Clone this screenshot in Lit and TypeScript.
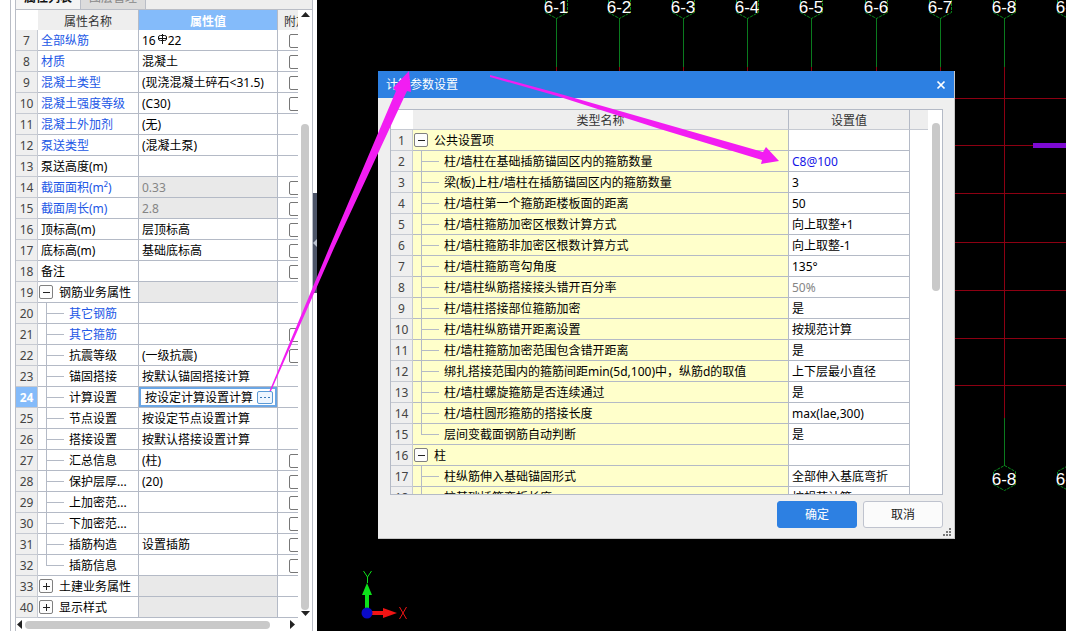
import { LitElement, html, svg, css, nothing } from "lit";
import { customElement, property, state } from "lit/decorators.js";
import { classMap } from "lit/directives/class-map.js";

type Kind = "root" | "group" | "child" | "last";

interface Row {
  no: number;
  name: string;
  kind?: Kind;
  open?: boolean;
  value?: string;
  link?: boolean;
  muted?: boolean;
  grey?: boolean;
  blue?: boolean;
  check?: boolean;
  bar?: boolean;
  editing?: boolean;
}

const PROPERTIES: Row[] = [
  { no: 7, name: "全部纵筋", value: "16|22", bar: true, link: true, check: true },
  { no: 8, name: "材质", value: "混凝土", link: true, check: true },
  { no: 9, name: "混凝土类型", value: "(现浇混凝土碎石<31.5)", link: true, check: true },
  { no: 10, name: "混凝土强度等级", value: "(C30)", link: true, check: true },
  { no: 11, name: "混凝土外加剂", value: "(无)", link: true },
  { no: 12, name: "泵送类型", value: "(混凝土泵)", link: true },
  { no: 13, name: "泵送高度(m)" },
  { no: 14, name: "截面面积(m²)", value: "0.33", link: true, grey: true, muted: true, check: true },
  { no: 15, name: "截面周长(m)", value: "2.8", link: true, grey: true, muted: true, check: true },
  { no: 16, name: "顶标高(m)", value: "层顶标高", check: true },
  { no: 17, name: "底标高(m)", value: "基础底标高", check: true },
  { no: 18, name: "备注", check: true },
  { no: 19, name: "钢筋业务属性", kind: "group", open: true, grey: true },
  { no: 20, name: "其它钢筋", kind: "child", link: true },
  { no: 21, name: "其它箍筋", kind: "child", link: true, check: true },
  { no: 22, name: "抗震等级", kind: "child", value: "(一级抗震)", check: true },
  { no: 23, name: "锚固搭接", kind: "child", value: "按默认锚固搭接计算" },
  { no: 24, name: "计算设置", kind: "child", value: "按设定计算设置计算", editing: true },
  { no: 25, name: "节点设置", kind: "child", value: "按设定节点设置计算" },
  { no: 26, name: "搭接设置", kind: "child", value: "按默认搭接设置计算" },
  { no: 27, name: "汇总信息", kind: "child", value: "(柱)", check: true },
  { no: 28, name: "保护层厚...", kind: "child", value: "(20)", check: true },
  { no: 29, name: "上加密范...", kind: "child", check: true },
  { no: 30, name: "下加密范...", kind: "child", check: true },
  { no: 31, name: "插筋构造", kind: "child", value: "设置插筋", check: true },
  { no: 32, name: "插筋信息", kind: "last", check: true },
  { no: 33, name: "土建业务属性", kind: "group", grey: true },
  { no: 40, name: "显示样式", kind: "group", grey: true },
];

const SETTINGS: Row[] = [
  { no: 1, name: "公共设置项", kind: "group", open: true },
  { no: 2, name: "柱/墙柱在基础插筋锚固区内的箍筋数量", kind: "child", value: "C8@100", blue: true },
  { no: 3, name: "梁(板)上柱/墙柱在插筋锚固区内的箍筋数量", kind: "child", value: "3" },
  { no: 4, name: "柱/墙柱第一个箍筋距楼板面的距离", kind: "child", value: "50" },
  { no: 5, name: "柱/墙柱箍筋加密区根数计算方式", kind: "child", value: "向上取整+1" },
  { no: 6, name: "柱/墙柱箍筋非加密区根数计算方式", kind: "child", value: "向上取整-1" },
  { no: 7, name: "柱/墙柱箍筋弯勾角度", kind: "child", value: "135°" },
  { no: 8, name: "柱/墙柱纵筋搭接接头错开百分率", kind: "child", value: "50%", muted: true },
  { no: 9, name: "柱/墙柱搭接部位箍筋加密", kind: "child", value: "是" },
  { no: 10, name: "柱/墙柱纵筋错开距离设置", kind: "child", value: "按规范计算" },
  { no: 11, name: "柱/墙柱箍筋加密范围包含错开距离", kind: "child", value: "是" },
  { no: 12, name: "绑扎搭接范围内的箍筋间距min(5d,100)中，纵筋d的取值", kind: "child", value: "上下层最小直径" },
  { no: 13, name: "柱/墙柱螺旋箍筋是否连续通过", kind: "child", value: "是" },
  { no: 14, name: "柱/墙柱圆形箍筋的搭接长度", kind: "child", value: "max(lae,300)" },
  { no: 15, name: "层间变截面钢筋自动判断", kind: "last", value: "是" },
  { no: 16, name: "柱", kind: "group", open: true },
  { no: 17, name: "柱纵筋伸入基础锚固形式", kind: "child", value: "全部伸入基底弯折" },
  { no: 18, name: "柱基础插筋弯折长度", kind: "child", value: "按规范计算" },
];

const gridStyles = css`
  table {
    border-collapse: separate;
    border-spacing: 0;
    table-layout: fixed;
    color: #000;
  }
  th,
  td {
    box-sizing: border-box;
    height: 21px;
    padding: 2px 0 0 3px;
    border-right: 1px solid #b4bac6;
    border-bottom: 1px solid #b4bac6;
    text-align: left;
    font-weight: 400;
    line-height: 18px;
    white-space: nowrap;
    overflow: hidden;
  }
  thead th {
    height: 20px;
    padding: 2px 0 0;
    border-bottom: 0;
    background: #eee;
    color: #333;
    line-height: 17px;
    text-align: center;
  }
  tbody th {
    padding: 2px 0 0;
    background: #efefef;
    border-color: #c6cad2;
    color: #444;
    text-align: center;
  }
  thead th.corner {
    background: #fff;
    border-right: 0;
  }
  td.name {
    padding: 0;
  }
  .muted {
    color: #858585;
  }
`;

@customElement("tree-label")
class TreeLabel extends LitElement {
  @property() kind: Kind = "root";
  @property() text = "";
  @property({ type: Boolean }) open = false;
  @property({ type: Boolean }) link = false;

  static styles = css`
    :host {
      display: block;
    }
    .label {
      display: flex;
      align-items: center;
      height: 20px;
      padding-left: 3px;
    }
    .group {
      gap: 6px;
      padding-left: 1px;
    }
    .branch {
      gap: 5px;
      padding-left: 8px;
    }
    .link {
      color: #2257e6;
    }
    .text {
      padding-top: 2px;
    }
    .twig {
      width: 18px;
      height: 20px;
      background: linear-gradient(#b4bac6, #b4bac6) 0 0 / 1px 100% no-repeat,
        linear-gradient(#b4bac6, #b4bac6) 0 10px / 100% 1px no-repeat;
    }
    .end {
      background-size: 1px 10px, 100% 1px;
    }
    .toggle {
      box-sizing: border-box;
      width: 14px;
      height: 14px;
      padding: 0;
      border: 1px solid #808080;
      border-radius: 2px;
      background: #fdfdfd;
    }
    .toggle svg {
      display: block;
    }
  `;

  private flip() {
    this.open = !this.open;
  }

  render() {
    if (this.kind === "group") {
      return html`<div class="label group">
        <button class="toggle" aria-label=${this.text} aria-expanded=${this.open} @click=${this.flip}>
          <svg width="12" height="12" stroke="#222" shape-rendering="crispEdges">
            <path d=${this.open ? "M3 6.5h7" : "M3 6.5h7M6.5 3v7"} />
          </svg>
        </button>
        <span class="text">${this.text}</span>
      </div>`;
    }
    const branch = this.kind !== "root";
    return html`<div class=${classMap({ label: true, branch, link: this.link })}>
      ${branch ? html`<span class=${classMap({ twig: true, end: this.kind === "last" })}></span>` : nothing}
      <span class="text">${this.text}</span>
    </div>`;
  }
}

@customElement("property-panel")
class PropertyPanel extends LitElement {
  static styles = [
    gridStyles,
    css`
      :host {
        display: flex;
        box-sizing: border-box;
        padding-left: 10px;
        background: #fff;
      }
      .frame {
        flex: 1;
        min-width: 0;
        display: flex;
        flex-direction: column;
        border-left: 1px solid #b9bdc6;
        border-right: 1px solid #b9bdc6;
        padding-left: 4px;
      }
      .tabs {
        display: flex;
        align-items: flex-end;
        height: 9px;
        overflow: hidden;
        background: #eee;
        border-left: 1px solid #b9bdc6;
        border-bottom: 1px solid #b9bdc6;
      }
      .tab {
        flex: none;
        box-sizing: border-box;
        height: 22px;
        padding: 0 8px;
        border: 0;
        border-right: 1px solid #b9bdc6;
        background: #dcdcdc;
        color: #888;
        font: inherit;
      }
      .tab.on {
        background: #f4f4f4;
        color: #111;
        font-weight: 700;
      }
      .body {
        flex: 1;
        min-height: 0;
        display: grid;
        grid-template: minmax(0, 1fr) 13px / minmax(0, 1fr) 14px;
        border-left: 1px solid #b9bdc6;
      }
      .view {
        overflow: hidden;
      }
      table {
        width: 299px;
      }
      .c-no {
        width: 22px;
      }
      .c-name {
        width: 101px;
      }
      .c-value {
        width: 139px;
      }
      thead th.sel,
      tbody th.sel {
        background: #84bbfa;
        color: #fff;
        font-weight: 700;
      }
      td.grey {
        background: #e9e9e9;
      }
      td.add {
        padding: 2px 0 0 11px;
        border-right: 0;
      }
      .tick {
        display: block;
        appearance: none;
        box-sizing: border-box;
        width: 14px;
        height: 14px;
        margin: 0;
        border: 1px solid #777;
        border-radius: 2px;
        background: #fff;
      }
      .bar {
        height: 11px;
      }
      td.edit {
        padding: 0;
      }
      .editor {
        display: flex;
        align-items: center;
        box-sizing: border-box;
        height: 20px;
        padding: 0 2px 0 4px;
        border: 2px solid #6ba6e4;
      }
      .editor input {
        flex: 1;
        min-width: 0;
        padding: 2px 0 0;
        border: 0;
        outline: 0;
        background: none;
        color: inherit;
        font: inherit;
      }
      .more {
        box-sizing: border-box;
        width: 16px;
        height: 13px;
        padding: 0;
        border: 1px solid #5b9ad6;
        border-radius: 2px;
        background: #eef6ff;
      }
      .more svg {
        display: block;
      }
      .scroll {
        display: flex;
        align-items: center;
      }
      .scroll.v {
        flex-direction: column;
        padding: 1px 0;
      }
      .scroll svg {
        flex: none;
      }
      .gap {
        flex: 106;
      }
      .thumb-v {
        flex: 486;
        width: 8px;
        border-radius: 4px;
        background: #c9c9c9;
      }
      .thumb-h {
        flex: 245;
        height: 8px;
        border-radius: 4px;
        background: #c9c9c9;
      }
      .rest {
        flex: 18;
      }
      .edge {
        align-self: center;
        display: flex;
        align-items: center;
        justify-content: center;
        width: 4px;
        height: 100px;
        margin-bottom: 146px;
        background: #4d5568;
      }
    `,
  ];

  private value(r: Row) {
    if (r.editing) {
      return html`<div class="editor">
        <input aria-label=${r.name} .value=${r.value ?? ""} />
        <button class="more" aria-label="计算设置">
          <svg width="14" height="11" fill="#3a78b8">
            <path d="M2 5h2v1H2zM6 5h2v1H6zM10 5h2v1h-2z" />
          </svg>
        </button>
      </div>`;
    }
    if (r.bar) {
      const [count, size] = r.value!.split("|");
      return html`${count}<svg class="bar" width="12" height="11" fill="none" stroke="#111" stroke-width="1">
          <path d="M6.5 0v10M2 4.500h9M4.500 1.500h4q2 0 2 1.500v2q0 1.500-2 1.500h-4q-2 0-2-1.500v-2q0-1.500 2-1.500z" /></svg
        >${size}`;
    }
    return r.value ?? "";
  }

  render() {
    return html`
      <div class="frame">
        <div class="tabs" role="tablist">
          <button class="tab on" role="tab" aria-selected="true">属性列表</button>
          <button class="tab" role="tab" aria-selected="false">图层管理</button>
        </div>
        <div class="body">
          <div class="view">
            <table>
              <colgroup>
                <col class="c-no" />
                <col class="c-name" />
                <col class="c-value" />
                <col />
              </colgroup>
              <thead>
                <tr>
                  <th class="corner"></th>
                  <th>属性名称</th>
                  <th class="sel">属性值</th>
                  <th>附加</th>
                </tr>
              </thead>
              <tbody>
                ${PROPERTIES.map(
                  (r) => html`<tr>
                    <th class=${classMap({ sel: !!r.editing })}>${r.no}</th>
                    <td class="name">
                      <tree-label .kind=${r.kind ?? "root"} .text=${r.name} ?open=${r.open} ?link=${r.link}></tree-label>
                    </td>
                    <td class=${classMap({ grey: !!r.grey, muted: !!r.muted, edit: !!r.editing })}>${this.value(r)}</td>
                    <td class="add">
                      ${r.check ? html`<input class="tick" type="checkbox" aria-label=${r.name} />` : nothing}
                    </td>
                  </tr>`
                )}
              </tbody>
            </table>
          </div>
          <div class="scroll v">
            <svg width="9" height="7" fill="#222"><path d="M0 6l4.500-5L9 6z" /></svg>
            <span class="gap"></span><span class="thumb-v"></span>
            <svg width="9" height="7" fill="#222"><path d="M0 1h9L4.500 6z" /></svg>
          </div>
          <div class="scroll">
            <svg width="9" height="9" fill="#222"><path d="M6 0v9L1 4.500z" /></svg>
            <span class="thumb-h"></span><span class="rest"></span>
            <svg width="10" height="9" fill="#222"><path d="M2 0v9l5-4.500z" /></svg>
          </div>
        </div>
      </div>
      <div class="edge">
        <svg width="4" height="8" fill="#bcc3d0"><path d="M4 0v8L0 4z" /></svg>
      </div>
    `;
  }
}

@customElement("settings-dialog")
class SettingsDialog extends LitElement {
  static styles = [
    gridStyles,
    css`
      :host {
        display: flex;
        flex-direction: column;
        box-sizing: border-box;
        background: #efefef;
        border-right: 1px solid #c8c8c8;
        border-bottom: 1px solid #c8c8c8;
      }
      header {
        display: flex;
        align-items: center;
        justify-content: space-between;
        height: 27px;
        padding: 0 7px 0 8px;
        background: #2d80e2;
        color: #fff;
      }
      h1 {
        margin: 0;
        font-size: 12px;
        font-weight: 400;
      }
      .close {
        display: flex;
        padding: 1px;
        border: 0;
        background: none;
      }
      .box {
        flex: 1;
        min-height: 0;
        display: flex;
        margin: 11px 11px 0 12px;
        border: 1px solid #b4bac6;
        background: #fff;
      }
      .view {
        flex: 1;
        min-width: 0;
        overflow: hidden;
      }
      table {
        width: 100%;
      }
      .c-no {
        width: 22px;
      }
      .c-value {
        width: 121px;
      }
      .c-fill {
        width: 18px;
      }
      tbody td.name {
        background: #ffffcb;
      }
      thead th {
        border-bottom: 1px solid #c6cad2;
      }
      thead th:last-child {
        border-right: 0;
      }
      td:last-child {
        border: 0;
      }
      td.blue {
        color: #1414e6;
      }
      .track {
        display: flex;
        flex-direction: column;
        width: 14px;
        padding: 13px 2px 0 4px;
        box-sizing: border-box;
      }
      .thumb {
        height: 168px;
        border-radius: 4px;
        background: #c9c9c9;
      }
      footer {
        display: flex;
        justify-content: flex-end;
        align-items: flex-start;
        gap: 6px;
        padding: 6px 11px 0 0;
      }
      .btn {
        box-sizing: border-box;
        width: 80px;
        height: 27px;
        padding: 0;
        border: 1px solid #bfc3ce;
        border-radius: 3px;
        background: #fbfbfb;
        color: #222;
        font: inherit;
      }
      .btn.primary {
        border-color: #2d80e2;
        background: #2d80e2;
        color: #fff;
      }
      .grip {
        align-self: flex-end;
        margin: 0 2px 1px 0;
      }
    `,
  ];

  render() {
    return html`
      <header>
        <h1>计算参数设置</h1>
        <button class="close" aria-label="关闭">
          <svg width="10" height="10" stroke="#fff" stroke-width="1.7"><path d="M1.500 1.500l7 7M8.500 1.500l-7 7" /></svg>
        </button>
      </header>
      <div class="box">
        <div class="view">
          <table>
            <colgroup>
              <col class="c-no" />
              <col />
              <col class="c-value" />
              <col class="c-fill" />
            </colgroup>
            <thead>
              <tr>
                <th class="corner"></th>
                <th>类型名称</th>
                <th>设置值</th>
                <th></th>
              </tr>
            </thead>
            <tbody>
              ${SETTINGS.map(
                (r) => html`<tr>
                  <th>${r.no}</th>
                  <td class="name"><tree-label .kind=${r.kind ?? "root"} .text=${r.name} ?open=${r.open}></tree-label></td>
                  <td class=${classMap({ blue: !!r.blue, muted: !!r.muted })}>${r.value ?? ""}</td>
                  <td></td>
                </tr>`
              )}
            </tbody>
          </table>
        </div>
        <div class="track"><div class="thumb"></div></div>
      </div>
      <footer>
        <button class="btn primary">确定</button>
        <button class="btn">取消</button>
      </footer>
      <svg class="grip" width="9" height="9" fill="#777">
        <path d="M6 0h2v2H6zM3 3h2v2H3zM6 3h2v2H6zM0 6h2v2H0zM3 6h2v2H3zM6 6h2v2H6z" />
      </svg>
    `;
  }
}

@customElement("drawing-view")
class DrawingView extends LitElement {
  static styles = css`
    :host {
      display: block;
      overflow: hidden;
      background: #000;
    }
    .sheet {
      display: block;
      width: 100%;
      height: 100%;
    }
    .tag {
      fill: #fff;
      font: 17px "Liberation Sans", sans-serif;
      text-anchor: middle;
    }
    .hex {
      fill: none;
      stroke: #0a8a1c;
      stroke-dasharray: 3 1;
    }
    .stem {
      stroke: #0a7a1e;
    }
    .axis {
      stroke: #8c0012;
    }
    .letter {
      font: 15px "Liberation Sans", sans-serif;
      text-anchor: middle;
    }
  `;

  @state() private axes = [239, 302, 366, 430, 494, 559, 623, 687, 751];
  @state() private levels = [98, 145, 193, 242, 290, 338, 385];

  private bubble(x: number, y: number, label: string) {
    return svg`<path class="hex" transform="translate(${x} ${y})" d="M.5-12.500l11 6v13l-11 6-11-6v-13z" />
      <text class="tag" x=${x} y=${y + 7}>${label}</text>`;
  }

  render() {
    return html`<svg class="sheet">
      ${this.levels.map((y) => svg`<line class="axis" x1="560" x2="100%" y1=${y + 0.5} y2=${y + 0.5} />`)}
      ${this.axes.map(
        (x, i) => svg`<line class="stem" x1=${x + 0.5} x2=${x + 0.5} y1="18" y2="67" />
          <line class="axis" x1=${x + 0.5} x2=${x + 0.5} y1="67" y2="418" />
          ${this.bubble(x, 6, `6-${i + 1}`)}`
      )}
      ${this.axes.slice(7).map(
        (x, i) => svg`<line class="stem" x1=${x + 0.5} x2=${x + 0.5} y1="418" y2="466" />
          ${this.bubble(x, 478, `6-${i + 8}`)}`
      )}
      <rect x="716" y="143" width="100%" height="5" fill="#7d0ad2" />
      <path d="M50 612v-20" stroke="#0de01a" stroke-width="4" />
      <path d="M50 583l5 12h-10z" fill="#0de01a" />
      <path d="M50 613h20" stroke="#f01414" stroke-width="4" />
      <path d="M80 613l-14-5v10z" fill="#f01414" />
      <circle cx="50" cy="613" r="5.500" fill="#0a0ac8" />
      <path d="M46.500 571l4 6 4-6M50.500 577v6" fill="none" stroke="#0de01a" />
      <path d="M82.500 607l7 12M89.500 607l-7 12" fill="none" stroke="#f01414" />
    </svg>`;
  }
}

@customElement("app-root")
class AppRoot extends LitElement {
  static styles = css`
    :host {
      display: grid;
      grid-template-columns: 317px minmax(0, 1fr);
      position: relative;
      height: 100vh;
      overflow: hidden;
      font: 12px/16px "Noto Sans", "Noto Sans CJK SC", sans-serif;
    }
    property-panel,
    drawing-view {
      min-height: 0;
    }
    settings-dialog {
      position: absolute;
      left: 378px;
      top: 71px;
      width: 577px;
      height: 468px;
    }
    .marks {
      position: absolute;
      inset: 0;
      width: 100%;
      height: 100%;
      pointer-events: none;
    }
  `;

  render() {
    return html`
      <property-panel></property-panel>
      <drawing-view></drawing-view>
      <settings-dialog></settings-dialog>
      <svg class="marks" fill="#f21df2" aria-hidden="true">
        <path d="M269.500 391L330 246 396 91l-3-3L409 71l2 21-4-1-73 157L271 391z" />
        <path d="M490 75L557 93 660 122.500 763 152l3-5 13 14-18 3 1-4L660 129 557 96 490 77z" />
      </svg>
    `;
  }
}
